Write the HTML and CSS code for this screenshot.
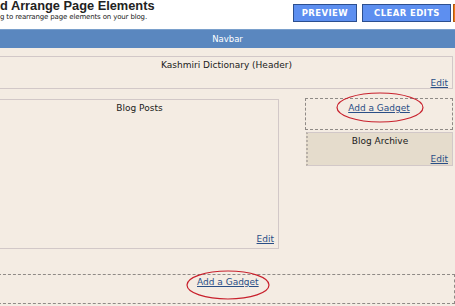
FILE: index.html
```html
<!DOCTYPE html>
<html>
<head>
<meta charset="utf-8">
<link rel="stylesheet" href="styles.css">
</head>
<body>
<div class="topbar">
  <div class="titles">
    <div class="title">d Arrange Page Elements</div>
    <div class="subtitle">g to rearrange page elements on your blog.</div>
  </div>
  <div class="buttons">
    <span class="btn btn-preview">PREVIEW</span>
    <span class="btn btn-clear">CLEAR EDITS</span>
    <span class="btn orange">SAVE</span>
  </div>
</div>
<div class="navbar">Navbar</div>
<div class="canvas">
  <div class="box header">
    <div class="box-title">Kashmiri Dictionary (Header)</div>
    <div class="edit-row"><a class="edit">Edit</a></div>
  </div>
  <div class="columns">
    <div class="box main">
      <div class="box-title">Blog Posts</div>
      <div class="edit-row"><a class="edit">Edit</a></div>
    </div>
    <div class="sidebar">
      <div class="add add-side">
        <a class="addlink">Add a Gadget</a>
        <svg class="ring ring-side" viewBox="0 0 88 31"><ellipse cx="44" cy="15.5" rx="43" ry="14.5" fill="none" stroke="#c8202c" stroke-width="1.2"/></svg>
      </div>
      <div class="box widget">
        <div class="box-title">Blog Archive</div>
        <div class="edit-row"><a class="edit">Edit</a></div>
      </div>
    </div>
  </div>
  <div class="add add-bottom">
    <a class="addlink">Add a Gadget</a>
    <svg class="ring ring-bottom" viewBox="0 0 84 30"><ellipse cx="42" cy="15" rx="41" ry="14" fill="none" stroke="#c8202c" stroke-width="1.2"/></svg>
  </div>
</div>
</body>
</html>
```

FILE: styles.css
```css
html, body {
  margin: 0;
  padding: 0;
}
body {
  width: 455px;
  height: 306px;
  overflow: hidden;
  background: #f4ece3;
  font-family: "DejaVu Sans", Verdana, sans-serif;
  color: #1a1a1a;
}
.topbar {
  height: 29px;
  background: #fff;
  display: flex;
  justify-content: space-between;
  align-items: flex-start;
  overflow: hidden;
}
.titles {
  display: flex;
  flex-direction: column;
}
.title {
  font-family: "Liberation Sans", Arial, sans-serif;
  font-weight: bold;
  font-size: 12.8px;
  line-height: 13px;
  margin-top: -1px;
  color: #222;
}
.subtitle {
  font-size: 7px;
  line-height: 8px;
  margin-top: 1px;
  color: #222;
  letter-spacing: -0.15px;
}
.buttons {
  display: flex;
  gap: 5px;
  margin-top: 4px;
  margin-right: -44px;
  flex-shrink: 0;
}
.btn {
  height: 16px;
  line-height: 16px;
  background: #5d8ff0;
  border: 1px solid #2c4f8f;
  color: #fff;
  font-weight: bold;
  font-size: 8.5px;
  letter-spacing: 0.4px;
}
.btn-preview { padding: 0 8px; }
.btn-clear { padding: 0 10px 0 11px; }
.orange {
  padding: 0 9px;
  margin-left: -3px;
  background: #f07818;
  border-color: #b05a10;
}
.navbar {
  height: 19px;
  line-height: 19px;
  background: #5a87bf;
  border-top: 1px solid #7aa0cc;
  color: #fff;
  font-size: 8.5px;
  text-align: center;
  box-sizing: border-box;
}
.canvas {
  margin-left: -12px;
  width: 465px;
  padding-top: 8px;
}
.box {
  border: 1px solid #d2c8c8;
  background: #f4ece3;
  box-sizing: border-box;
  display: flex;
  flex-direction: column;
  justify-content: space-between;
}
.box-title {
  text-align: center;
  font-size: 9px;
  line-height: 11px;
  padding-top: 3px;
}
.edit-row {
  text-align: right;
  padding: 0 4px 1px 0;
}
.edit {
  font-size: 9px;
  line-height: 11px;
  color: #2a4e86;
  text-decoration: underline;
}
.header {
  width: 465px;
  height: 33px;
}
.header .box-title { padding-left: 12px; padding-top: 3px; }
.header .edit-row { padding-bottom: 4px; }
.columns {
  display: flex;
  margin-top: 10px;
  gap: 26px;
}
.main {
  width: 291px;
  height: 150px;
}
.main .box-title { padding-left: 12px; padding-top: 3px; }
.main .edit-row { padding-bottom: 2px; }
.sidebar {
  width: 148px;
  display: flex;
  flex-direction: column;
  gap: 2px;
  margin-top: -1px;
}
.add {
  position: relative;
  border: 1px dashed #8f8a86;
  box-sizing: border-box;
  text-align: center;
  font-size: 9px;
  line-height: 11px;
}
.addlink {
  font-size: 9px;
  line-height: 11px;
  color: #2a4e86;
  text-decoration: underline;
}
.add-side {
  height: 32px;
  padding-top: 4px;
}
.widget {
  margin-left: 1px;
  width: 147px;
  height: 34px;
  background: #e5dccc;
  border-left: 2px dotted #b8b0a8;
}
.widget .box-title { padding-top: 3px; }
.widget .edit-row { padding-bottom: 3px; }
.add-bottom {
  margin-top: 25px;
  width: 467px;
  height: 30px;
  padding: 2px 0 0 0;
  text-align: left;
}
.add-bottom .addlink {
  margin-left: 208px;
}
.ring {
  position: absolute;
}
.ring-side {
  width: 88px;
  height: 31px;
  left: 30px;
  top: -7px;
}
.ring-bottom {
  width: 84px;
  height: 30px;
  left: 197px;
  top: -5px;
}
```
